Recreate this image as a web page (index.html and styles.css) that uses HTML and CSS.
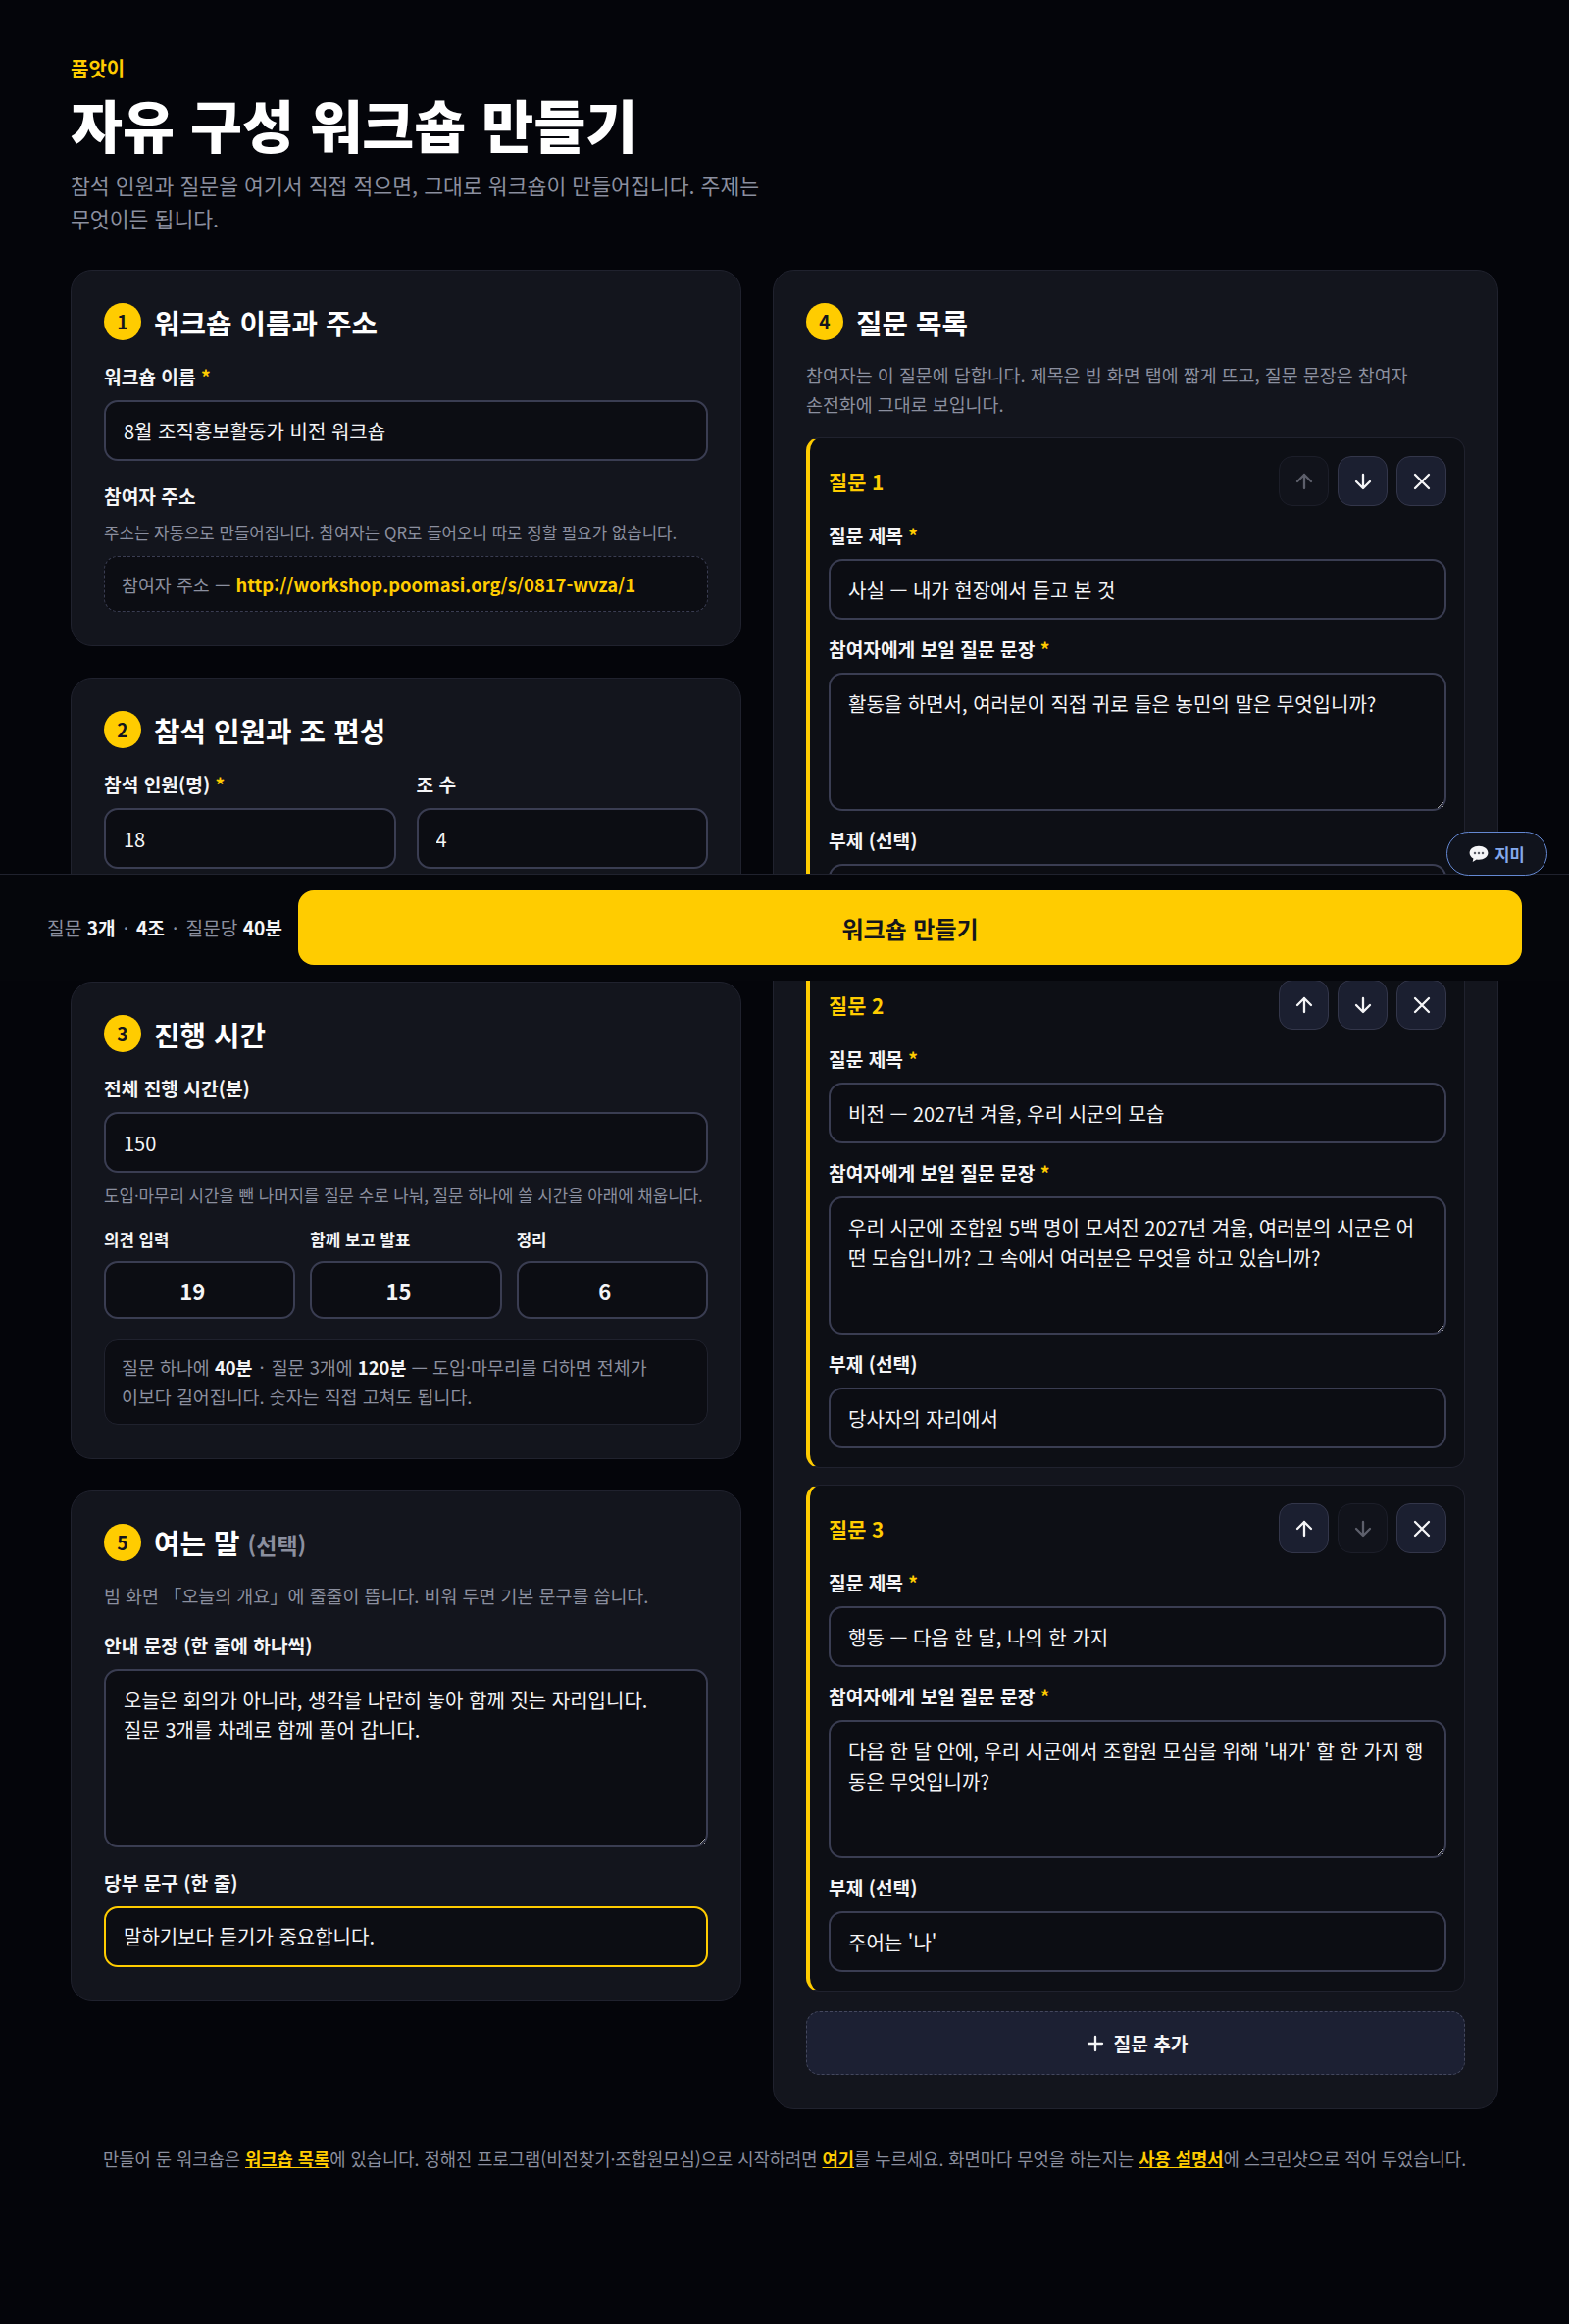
FILE: index.html
```html
<!DOCTYPE html>
<html lang="ko">
<head>
<meta charset="utf-8">
<title>자유 구성 워크숍 만들기</title>
<link rel="stylesheet" href="styles.css">
</head>
<body>
<main class="page">
  <header class="intro">
    <div class="eyebrow">품앗이</div>
    <h1>자유 구성 워크숍 만들기</h1>
    <p class="lead">참석 인원과 질문을 여기서 직접 적으면, 그대로 워크숍이 만들어집니다. 주제는 무엇이든 됩니다.</p>
  </header>

  <div class="columns">
    <div class="col">
      <section class="card">
        <h2 class="card-title"><span class="num">1</span><span>워크숍 이름과 주소</span></h2>
        <div class="field">
          <label class="lbl">워크숍 이름 <em>*</em></label>
          <input class="inp" type="text" value="8월 조직홍보활동가 비전 워크숍">
        </div>
        <div class="field">
          <div class="lbl lbl-tight">참여자 주소</div>
          <p class="hint">주소는 자동으로 만들어집니다. 참여자는 QR로 들어오니 따로 정할 필요가 없습니다.</p>
          <div class="addr">참여자 주소 — <b>http://workshop.poomasi.org/s/0817-wvza/1</b></div>
        </div>
      </section>

      <section class="card card-team">
        <h2 class="card-title"><span class="num">2</span><span>참석 인원과 조 편성</span></h2>
        <div class="two">
          <div>
            <label class="lbl">참석 인원(명) <em>*</em></label>
            <input class="inp" type="number" value="18">
          </div>
          <div>
            <label class="lbl">조 수</label>
            <input class="inp" type="number" value="4">
          </div>
        </div>
      </section>

      <section class="card">
        <h2 class="card-title"><span class="num">3</span><span>진행 시간</span></h2>
        <div class="field">
          <label class="lbl">전체 진행 시간(분)</label>
          <input class="inp" type="number" value="150">
          <p class="hint hint-after">도입·마무리 시간을 뺀 나머지를 질문 수로 나눠, 질문 하나에 쓸 시간을 아래에 채웁니다.</p>
        </div>
        <div class="three">
          <div>
            <label class="lbl lbl-sm">의견 입력</label>
            <input class="inp inp-num" type="number" value="19">
          </div>
          <div>
            <label class="lbl lbl-sm">함께 보고 발표</label>
            <input class="inp inp-num" type="number" value="15">
          </div>
          <div>
            <label class="lbl lbl-sm">정리</label>
            <input class="inp inp-num" type="number" value="6">
          </div>
        </div>
        <p class="info">질문 하나에 <b>40분</b><span class="sep">·</span>질문 3개에 <b>120분</b> — 도입·마무리를 더하면 전체가 이보다 길어집니다. 숫자는 직접 고쳐도 됩니다.</p>
      </section>

      <section class="card">
        <h2 class="card-title card-title-hint"><span class="num">5</span><span>여는 말 <small>(선택)</small></span></h2>
        <p class="hint hint-lead">빔 화면 「오늘의 개요」에 줄줄이 뜹니다. 비워 두면 기본 문구를 씁니다.</p>
        <div class="field">
          <label class="lbl">안내 문장 (한 줄에 하나씩)</label>
          <textarea class="inp area area-lg">오늘은 회의가 아니라, 생각을 나란히 놓아 함께 짓는 자리입니다.
질문 3개를 차례로 함께 풀어 갑니다.</textarea>
        </div>
        <div class="field">
          <label class="lbl">당부 문구 (한 줄)</label>
          <input class="inp inp-focus" type="text" value="말하기보다 듣기가 중요합니다.">
        </div>
      </section>
    </div>

    <div class="col">
      <section class="card">
        <h2 class="card-title card-title-hint"><span class="num">4</span><span>질문 목록</span></h2>
        <p class="hint hint-lead hint-two">참여자는 이 질문에 답합니다. 제목은 빔 화면 탭에 짧게 뜨고, 질문 문장은 참여자 손전화에 그대로 보입니다.</p>

        <div class="qlist">
          <article class="q">
            <div class="q-head">
              <h3>질문 1</h3>
              <div class="q-tools">
                <button class="tool" disabled><svg viewBox="0 0 24 24" class="ico"><path d="M12 19V5M5 12l7-7 7 7"/></svg></button>
                <button class="tool"><svg viewBox="0 0 24 24" class="ico"><path d="M12 5v14M5 12l7 7 7-7"/></svg></button>
                <button class="tool"><svg viewBox="0 0 24 24" class="ico"><path d="M5 5l14 14M19 5L5 19"/></svg></button>
              </div>
            </div>
            <label class="lbl">질문 제목 <em>*</em></label>
            <input class="inp" type="text" value="사실 — 내가 현장에서 듣고 본 것">
            <label class="lbl lbl-gap">참여자에게 보일 질문 문장 <em>*</em></label>
            <textarea class="inp area">활동을 하면서, 여러분이 직접 귀로 들은 농민의 말은 무엇입니까?</textarea>
            <label class="lbl lbl-gap">부제 (선택)</label>
            <input class="inp" type="text" value="">
          </article>

          <article class="q">
            <div class="q-head">
              <h3>질문 2</h3>
              <div class="q-tools">
                <button class="tool"><svg viewBox="0 0 24 24" class="ico"><path d="M12 19V5M5 12l7-7 7 7"/></svg></button>
                <button class="tool"><svg viewBox="0 0 24 24" class="ico"><path d="M12 5v14M5 12l7 7 7-7"/></svg></button>
                <button class="tool"><svg viewBox="0 0 24 24" class="ico"><path d="M5 5l14 14M19 5L5 19"/></svg></button>
              </div>
            </div>
            <label class="lbl">질문 제목 <em>*</em></label>
            <input class="inp" type="text" value="비전 — 2027년 겨울, 우리 시군의 모습">
            <label class="lbl lbl-gap">참여자에게 보일 질문 문장 <em>*</em></label>
            <textarea class="inp area">우리 시군에 조합원 5백 명이 모셔진 2027년 겨울, 여러분의 시군은 어떤 모습입니까? 그 속에서 여러분은 무엇을 하고 있습니까?</textarea>
            <label class="lbl lbl-gap">부제 (선택)</label>
            <input class="inp" type="text" value="당사자의 자리에서">
          </article>

          <article class="q">
            <div class="q-head">
              <h3>질문 3</h3>
              <div class="q-tools">
                <button class="tool"><svg viewBox="0 0 24 24" class="ico"><path d="M12 19V5M5 12l7-7 7 7"/></svg></button>
                <button class="tool" disabled><svg viewBox="0 0 24 24" class="ico"><path d="M12 5v14M5 12l7 7 7-7"/></svg></button>
                <button class="tool"><svg viewBox="0 0 24 24" class="ico"><path d="M5 5l14 14M19 5L5 19"/></svg></button>
              </div>
            </div>
            <label class="lbl">질문 제목 <em>*</em></label>
            <input class="inp" type="text" value="행동 — 다음 한 달, 나의 한 가지">
            <label class="lbl lbl-gap">참여자에게 보일 질문 문장 <em>*</em></label>
            <textarea class="inp area">다음 한 달 안에, 우리 시군에서 조합원 모심을 위해 '내가' 할 한 가지 행동은 무엇입니까?</textarea>
            <label class="lbl lbl-gap">부제 (선택)</label>
            <input class="inp" type="text" value="주어는 '나'">
          </article>
        </div>

        <button class="add"><svg viewBox="0 0 24 24" class="ico"><path d="M12 5v14M5 12h14"/></svg>질문 추가</button>
      </section>
    </div>
  </div>

  <p class="foot">만들어 둔 워크숍은 <a href="#">워크숍 목록</a>에 있습니다. 정해진 프로그램(비전찾기·조합원모심)으로 시작하려면 <a href="#">여기</a>를 누르세요. 화면마다 무엇을 하는지는 <a href="#">사용 설명서</a>에 스크린샷으로 적어 두었습니다.</p>
</main>

<div class="bar">
  <div class="bar-info"><span>질문 </span><b>3개</b><span class="sep">·</span><b>4조</b><span class="sep">·</span><span>질문당 </span><b>40분</b></div>
  <button class="go">워크숍 만들기</button>
</div>

<button class="chat"><svg viewBox="0 0 24 21" class="chat-ico"><path class="chat-b" d="M12 .8C5.6.8.7 4.6.7 9.3c0 2.9 1.8 5.4 4.6 7l-.9 4 4.9-2.9c.9.2 1.7.2 2.7.2 6.4 0 11.3-3.6 11.3-8.3S18.400.8 12 .8z"/><circle class="chat-d" cx="7.200" cy="9.500" r="1.500"/><circle class="chat-d" cx="12" cy="9.500" r="1.500"/><circle class="chat-d" cx="16.800" cy="9.500" r="1.500"/></svg>지미</button>
</body>
</html>
```
FILE: styles.css
```css
* { box-sizing: border-box; }
html, body { margin: 0; padding: 0; }
body {
  position: relative;
  min-height: 2370px;
  background: #04050a;
  color: #f5f5f7;
  font-family: "Noto Sans CJK KR", "Noto Sans", sans-serif;
  font-size: 17.6px;
  word-break: keep-all;
}
.page { padding: 56px 72px 0; }

.eyebrow { font-size: 20px; line-height: 27px; font-weight: 700; color: #ffcc00; }
h1 { margin: 6px 0 0; font-size: 57.6px; line-height: 74px; font-weight: 800; color: #fff; }
.lead { margin: 9px 0 0; max-width: 720px; font-size: 21.6px; line-height: 34px; color: #8b8f9f; }

.columns {
  display: grid;
  grid-template-columns: 684fr 740fr;
  gap: 32px;
  align-items: start;
  margin-top: 35px;
}
.col { display: flex; flex-direction: column; gap: 32px; min-width: 0; }

.card {
  background: #13151d;
  border: 1px solid #20222e;
  border-radius: 22px;
  padding: 34px 33px 34px;
}
.card-team { padding-bottom: 82px; }

.card-title {
  display: flex;
  align-items: center;
  gap: 13px;
  height: 36px;
  margin: 0 0 24px;
  font-size: 28.8px;
  font-weight: 700;
  color: #fff;
}
.card-title small { font-size: 23px; font-weight: 600; color: #8b8f9f; }
.card-title-hint { margin-bottom: 22px; }
.num {
  display: inline-flex;
  align-items: center;
  justify-content: center;
  width: 38px;
  height: 38px;
  flex: none;
  border-radius: 50%;
  background: #ffcc00;
  color: #14151c;
  font-size: 19.2px;
  font-weight: 700;
}

.field { margin-bottom: 22px; }
.field:last-child { margin-bottom: 0; }
.lbl {
  display: block;
  font-size: 19.2px;
  line-height: 28px;
  font-weight: 600;
  color: #f5f5f7;
  margin-bottom: 10px;
}
.lbl em { font-style: normal; color: #ffcc00; }
.lbl-tight { margin-bottom: 9px; }
.lbl-sm { font-size: 16.8px; line-height: 26px; margin-bottom: 9px; }
.lbl-gap { margin-top: 16px; }

.hint { margin: 0 0 10px; font-size: 16.8px; line-height: 28px; color: #8b8f9f; }
.hint-after { margin: 9px 0 0; }
.hint-lead { margin: 0 0 23px; font-size: 18.4px; }
.hint-two { line-height: 29.6px; margin-bottom: 19px; }

.inp {
  display: block;
  width: 100%;
  height: 62px;
  padding: 0 18px;
  background: #0c0d13;
  border: 2px solid #3a3d52;
  border-radius: 14px;
  color: #f5f5f7;
  font: inherit;
  font-size: 20px;
  outline: none;
}
.inp-focus { border-color: #ffcc00; }
.inp-num { height: 59px; text-align: center; font-weight: 600; font-size: 22px; }
.area {
  height: 141px;
  padding: 15px 18px;
  line-height: 30.4px;
  resize: vertical;
  word-break: normal;
}
.area-lg { height: 182px; }

.addr {
  height: 57px;
  display: flex;
  align-items: center;
  padding: 0 17px;
  white-space: pre;
  background: #0c0d13;
  border: 1px dashed #3a3d52;
  border-radius: 14px;
  font-size: 18.4px;
  color: #8b8f9f;
}
.addr b { font-weight: 700; color: #ffcc00; }

.two { display: grid; grid-template-columns: 1fr 1fr; gap: 21px; }
.three { display: grid; grid-template-columns: repeat(3, 1fr); gap: 15px; margin-top: -4px; }
.info {
  margin: 21px 0 0;
  padding: 12px 26px 12px 17px;
  background: #0c0d13;
  border: 1px solid #20222e;
  border-radius: 14px;
  font-size: 18.4px;
  line-height: 30.4px;
  color: #8b8f9f;
}
.info b { color: #f5f5f7; font-weight: 700; }
.sep { margin: 0 7px; }

.qlist { display: flex; flex-direction: column; gap: 17px; }
.q {
  padding: 18px 18px 19px 19px;
  background: #0d0f15;
  border: 1px solid #20222e;
  border-left: 4px solid #ffcc00;
  border-radius: 14px;
}
.q-head { display: flex; align-items: center; justify-content: space-between; margin-bottom: 16px; }
.q-head h3 { margin: 0; font-size: 20.8px; font-weight: 700; color: #ffcc00; }
.q-tools { display: flex; gap: 9px; }
.tool {
  display: flex;
  align-items: center;
  justify-content: center;
  width: 51px;
  height: 51px;
  padding: 0;
  background: #1b1f30;
  border: 1px solid #33364a;
  border-radius: 14px;
}
.tool[disabled] { background: #11131b; border-color: #1c1e29; }
.tool[disabled] .ico { stroke: #5d5f6b; }
.ico { width: 24px; height: 24px; fill: none; stroke: #f5f5f7; stroke-width: 2.3; stroke-linecap: round; stroke-linejoin: round; }

.add {
  display: flex;
  align-items: center;
  justify-content: center;
  gap: 7px;
  width: 100%;
  height: 65px;
  margin-top: 20px;
  background: #1c2033;
  border: 1px dashed #44485e;
  border-radius: 14px;
  color: #f5f5f7;
  font: inherit;
  font-size: 19.2px;
  font-weight: 700;
}

.foot {
  margin: 36px 0 0;
  text-align: center;
  font-size: 17.7px;
  line-height: 28px;
  color: #8b8f9f;
}
.foot a { color: #ffcc00; font-weight: 700; text-decoration: underline; }

.bar {
  position: absolute;
  top: 891px;
  left: 0;
  right: 0;
  height: 109px;
  display: flex;
  align-items: center;
  gap: 16px;
  padding: 0 48px;
  background: #05060b;
  border-top: 1px solid #20222e;
}
.bar-info { display: flex; flex: none; font-size: 19.2px; line-height: 28px; color: #8b8f9f; white-space: pre; }
.bar-info b { color: #f5f5f7; font-weight: 700; }
.bar-info .sep { margin: 0 8px; }
.go {
  flex: 1;
  height: 76px;
  background: #ffcc00;
  border: 0;
  border-radius: 16px;
  color: #14151c;
  font: inherit;
  font-size: 24px;
  font-weight: 700;
}

.chat {
  position: absolute;
  top: 848px;
  left: 1475px;
  width: 103px;
  height: 45px;
  display: flex;
  align-items: center;
  justify-content: center;
  gap: 6px;
  padding: 0;
  background: #10131c;
  border: 1.500px solid #6488d2;
  border-radius: 23px;
  color: #84a9ec;
  font: inherit;
  font-size: 16.500px;
  font-weight: 700;
}
.chat-ico { width: 20px; height: 17.500px; }
.chat-b { fill: #f5f5f7; }
.chat-d { fill: #5a5c66; }
```
